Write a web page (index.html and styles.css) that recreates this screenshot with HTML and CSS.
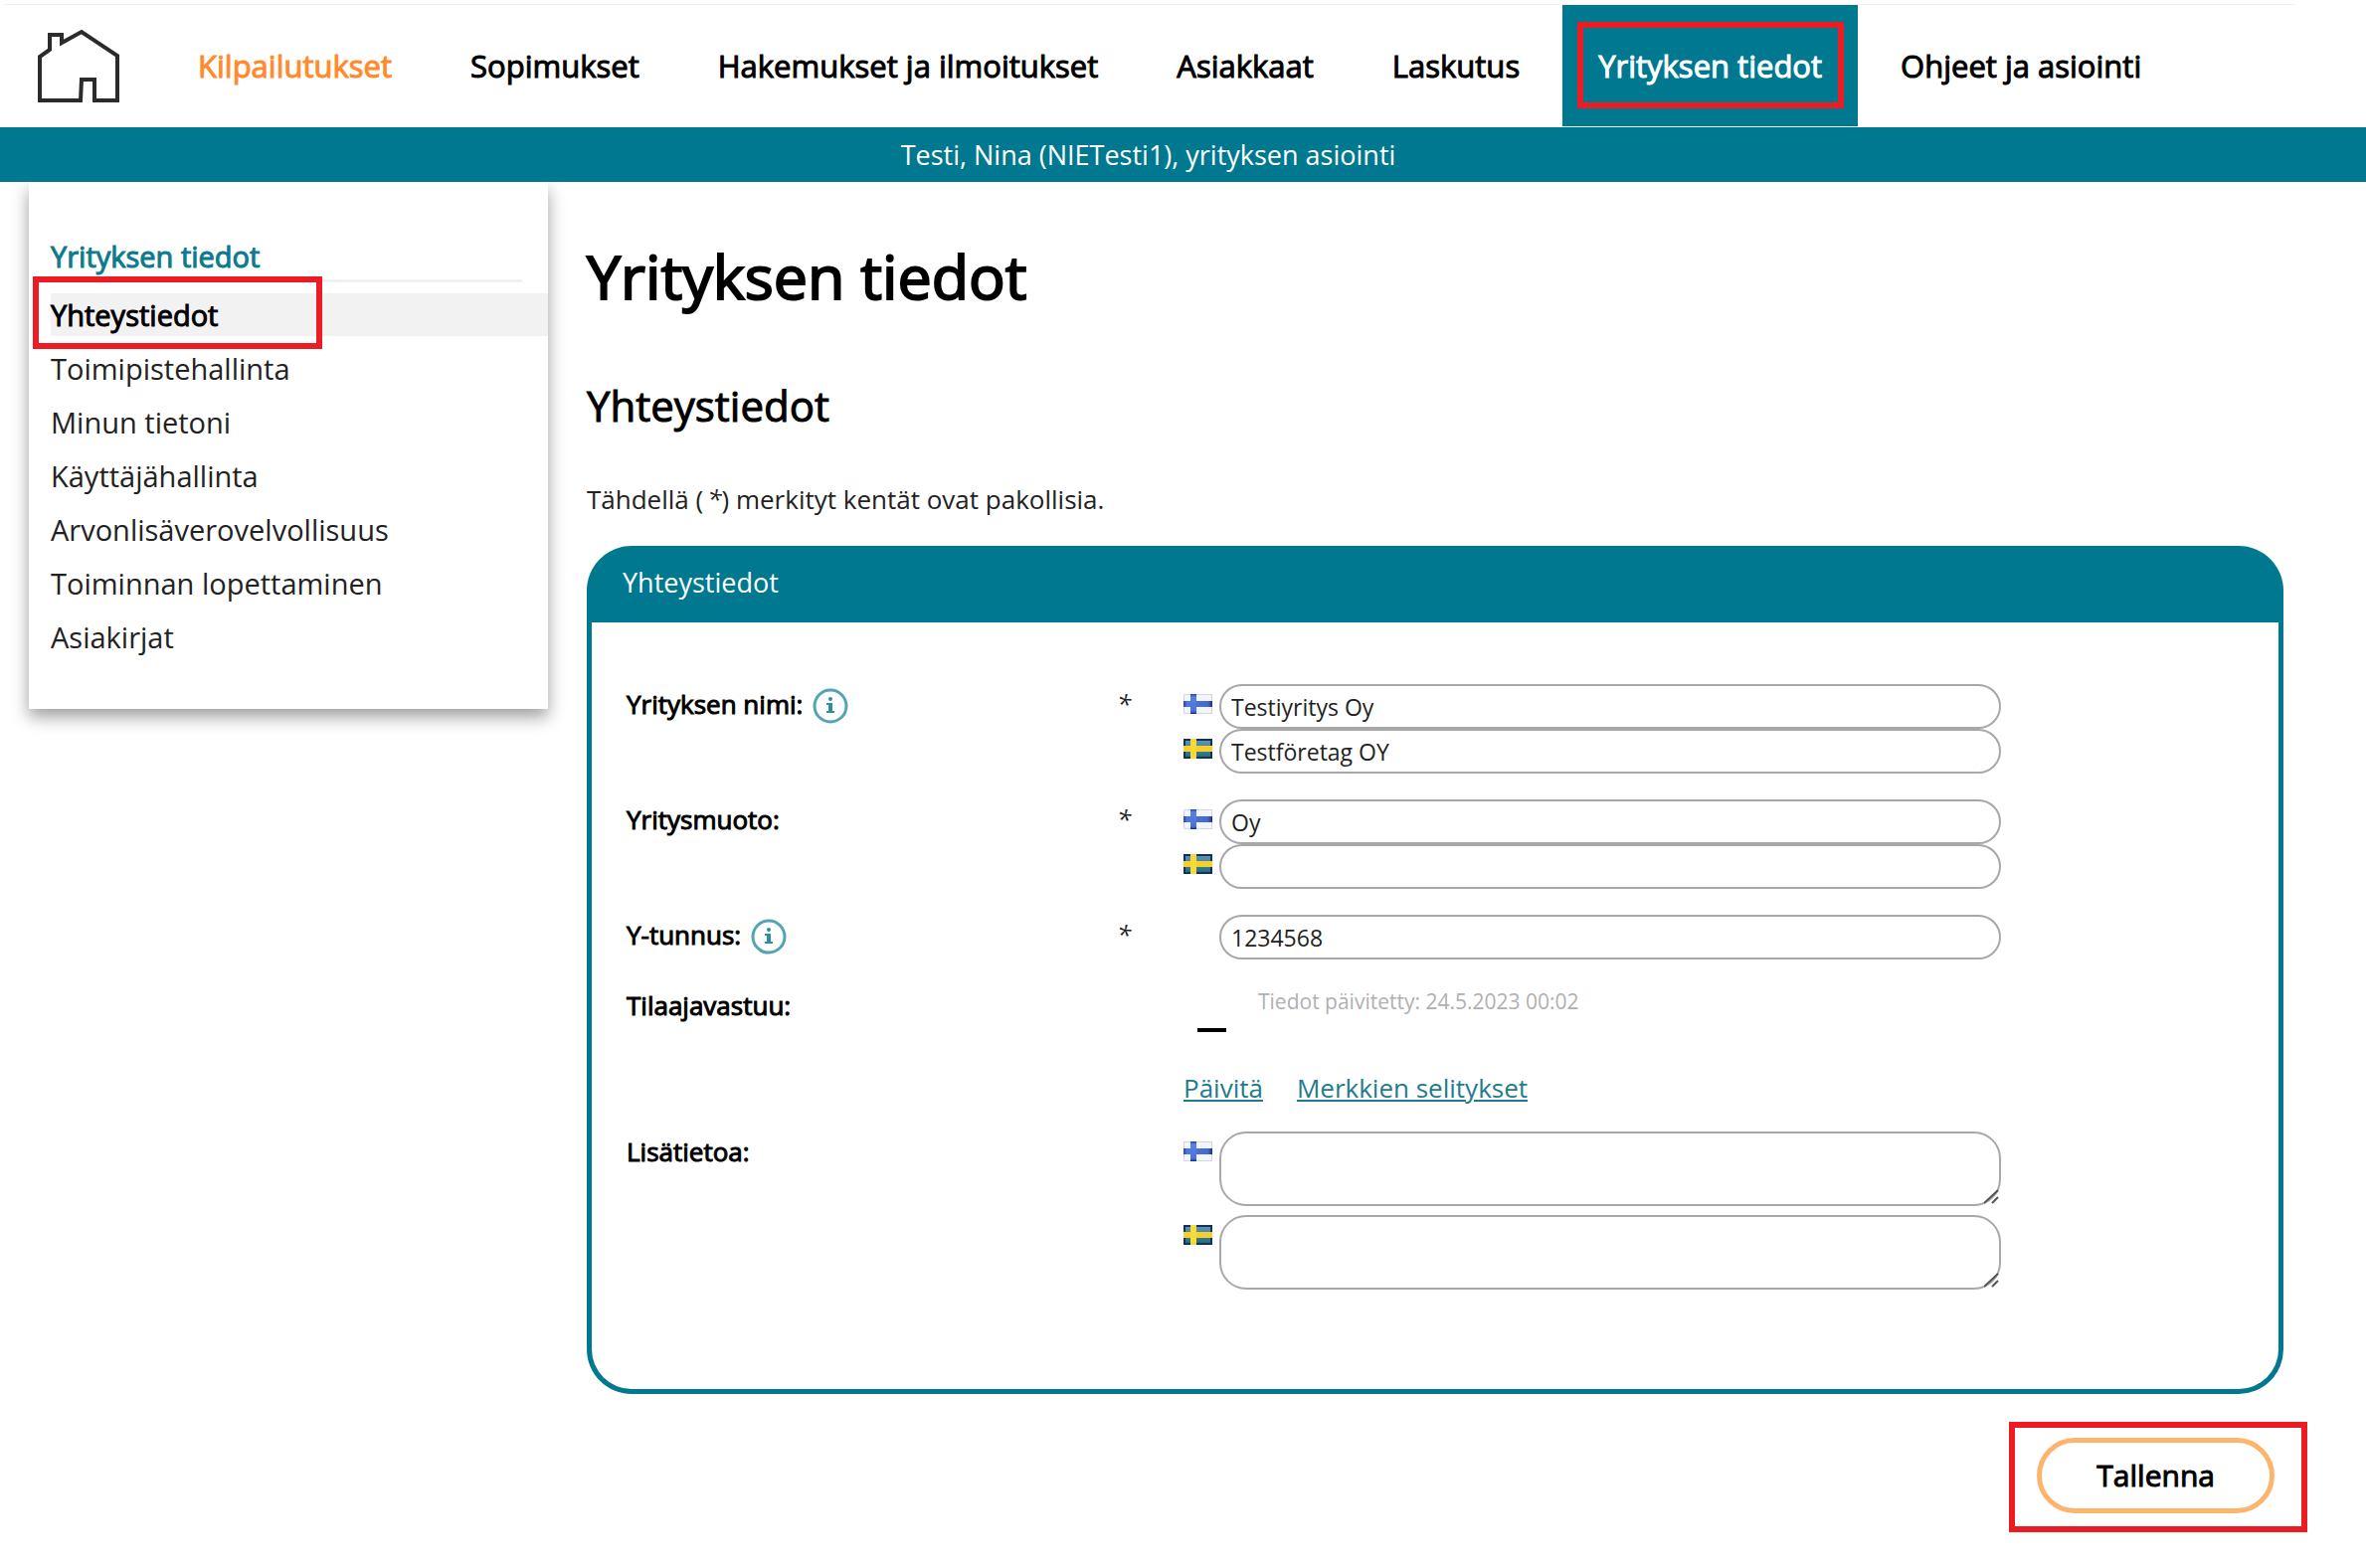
FILE: index.html
```html
<!DOCTYPE html>
<html lang="fi">
<head>
<meta charset="utf-8">
<title>Yrityksen tiedot</title>
<link rel="stylesheet" href="styles.css">
</head>
<body>
<svg class="sprite" aria-hidden="true">
  <defs>
    <linearGradient id="fi-h" x1="0" x2="1" y1="0" y2="0">
      <stop offset="0" stop-color="#2740a8"/><stop offset=".12" stop-color="#4f78dc"/>
      <stop offset=".85" stop-color="#4468cf"/><stop offset="1" stop-color="#1a2c8c"/>
    </linearGradient>
    <linearGradient id="fi-v" x1="0" x2="0" y1="0" y2="1">
      <stop offset="0" stop-color="#2740a8"/><stop offset=".15" stop-color="#5a82e2"/>
      <stop offset=".85" stop-color="#4a72da"/><stop offset="1" stop-color="#1a2490"/>
    </linearGradient>
    <linearGradient id="se-bg" x1="0" x2="0" y1="0" y2="1">
      <stop offset="0" stop-color="#5b94b4"/><stop offset="1" stop-color="#20707f"/>
    </linearGradient>
  </defs>
  <symbol id="flag-fi" viewBox="0 0 29 20">
    <rect width="29" height="20" fill="#d3d5e2"/>
    <rect x="1" y="1" width="27" height="18" fill="#f4f5fa"/>
    <rect y="7" width="29" height="6" fill="url(#fi-h)"/>
    <rect x="7" width="6" height="20" fill="url(#fi-v)"/>
  </symbol>
  <symbol id="flag-se" viewBox="0 0 29 20">
    <rect width="29" height="20" fill="#12305e"/>
    <rect x="2" y="2" width="25" height="16" fill="url(#se-bg)"/>
    <rect y="7" width="29" height="6" fill="#f5cf2e"/>
    <rect x="7" width="6" height="20" fill="#f9d936"/>
  </symbol>
  <symbol id="info" viewBox="0 0 36 36">
    <circle cx="18" cy="18" r="16" fill="#fff" stroke="#54a5b2" stroke-width="3"/>
    <circle cx="18" cy="11" r="2" fill="#2f8d9e"/>
    <path d="M14 15h6v8h2v2h-8v-2h2v-6h-2z" fill="#2f8d9e"/>
  </symbol>
</svg>

<header class="header">
  <a class="home" href="#" aria-label="Etusivu">
    <svg class="home-icon" viewBox="0 0 86 74" aria-hidden="true">
      <path d="M4 72V28L14 21V6H26V14L46 3L82 27V72H59V51H46L45 72Z" fill="none" stroke="#2b2b2b" stroke-width="4"/>
    </svg>
  </a>
  <nav class="nav" aria-label="Päävalikko">
    <a class="nav-link nav-link-accent" href="#">Kilpailutukset</a>
    <a class="nav-link" href="#">Sopimukset</a>
    <a class="nav-link" href="#">Hakemukset ja ilmoitukset</a>
    <a class="nav-link" href="#">Asiakkaat</a>
    <a class="nav-link" href="#">Laskutus</a>
    <a class="nav-link nav-link-active" href="#" aria-current="page">Yrityksen tiedot</a>
    <a class="nav-link" href="#">Ohjeet ja asiointi</a>
  </nav>
</header>
<div class="userbar">Testi, Nina (NIETesti1), yrityksen asiointi</div>

<div class="layout">
  <aside class="sidebar">
    <h2 class="side-title">Yrityksen tiedot</h2>
    <nav class="side-nav" aria-label="Yrityksen tiedot">
      <a class="side-link side-link-active" href="#" aria-current="page">Yhteystiedot</a>
      <a class="side-link" href="#">Toimipistehallinta</a>
      <a class="side-link" href="#">Minun tietoni</a>
      <a class="side-link" href="#">Käyttäjähallinta</a>
      <a class="side-link" href="#">Arvonlisäverovelvollisuus</a>
      <a class="side-link" href="#">Toiminnan lopettaminen</a>
      <a class="side-link" href="#">Asiakirjat</a>
    </nav>
  </aside>

  <main class="main">
    <h1 class="page-title">Yrityksen tiedot</h1>
    <h2 class="section-title">Yhteystiedot</h2>
    <p class="note">Tähdellä (<em class="note-star">*</em>) merkityt kentät ovat pakollisia.</p>

    <form class="form">
      <section class="panel">
        <h3 class="panel-title">Yhteystiedot</h3>
        <div class="panel-body">
          <div class="row">
            <div class="label"><label for="name-fi">Yrityksen nimi:</label> <svg class="info" role="img" aria-label="Ohje"><use href="#info"/></svg></div>
            <em class="star">*</em>
            <div class="fields">
              <div class="field"><svg class="flag" aria-hidden="true"><use href="#flag-fi"/></svg><input class="input" id="name-fi" type="text" value="Testiyritys Oy"></div>
              <div class="field"><svg class="flag" aria-hidden="true"><use href="#flag-se"/></svg><input class="input" type="text" value="Testföretag OY" aria-label="Yrityksen nimi ruotsiksi"></div>
            </div>
          </div>
          <div class="row">
            <div class="label"><label for="form-fi">Yritysmuoto:</label></div>
            <em class="star">*</em>
            <div class="fields">
              <div class="field"><svg class="flag" aria-hidden="true"><use href="#flag-fi"/></svg><input class="input" id="form-fi" type="text" value="Oy"></div>
              <div class="field"><svg class="flag" aria-hidden="true"><use href="#flag-se"/></svg><input class="input" type="text" aria-label="Yritysmuoto ruotsiksi"></div>
            </div>
          </div>
          <div class="row">
            <div class="label"><label for="business-id">Y-tunnus:</label> <svg class="info" role="img" aria-label="Ohje"><use href="#info"/></svg></div>
            <em class="star">*</em>
            <div class="fields">
              <div class="field"><span class="flag"></span><input class="input" id="business-id" type="text" value="1234568"></div>
            </div>
          </div>
          <div class="row">
            <div class="label">Tilaajavastuu:</div>
            <span></span>
            <div class="fields">
              <div class="status"><span class="dash"></span><span class="updated">Tiedot päivitetty: 24.5.2023 00:02</span></div>
              <div class="links"><a class="link" href="#">Päivitä</a><a class="link" href="#">Merkkien selitykset</a></div>
            </div>
          </div>
          <div class="row">
            <div class="label"><label for="info-fi">Lisätietoa:</label></div>
            <span></span>
            <div class="fields fields-spaced">
              <div class="field"><svg class="flag" aria-hidden="true"><use href="#flag-fi"/></svg><textarea class="input textarea" id="info-fi"></textarea></div>
              <div class="field"><svg class="flag" aria-hidden="true"><use href="#flag-se"/></svg><textarea class="input textarea" aria-label="Lisätietoa ruotsiksi"></textarea></div>
            </div>
          </div>
        </div>
      </section>
      <div class="actions">
        <div class="highlight"><button class="button" type="button">Tallenna</button></div>
      </div>
    </form>
  </main>
</div>
</body>
</html>
```
FILE: styles.css
```css
:root {
  --teal: #00788f;
  --red: #ec1c24;
}

*,
*::after {
  box-sizing: border-box;
}

body {
  margin: 0;
  background: #fff;
  color: #222;
  font-family: "Open Sans", "Noto Sans", sans-serif;
  font-size: 26px;
  line-height: 36px;
}

h1, h2, h3, p {
  margin: 0;
  font-weight: 400;
}

a {
  color: inherit;
  text-decoration: none;
}

.sprite {
  position: absolute;
  width: 0;
  height: 0;
}

/* Top navigation */
.header {
  display: flex;
  align-items: stretch;
  margin: 4px 72px 1px 3px;
  border-top: 1px solid #f1f1f1;
}

.home {
  display: flex;
  align-items: center;
  width: 160px;
  padding-left: 33px;
}

.home-icon {
  width: 86px;
  height: 74px;
}

.nav {
  display: flex;
  gap: 7px;
}

.nav-link {
  position: relative;
  padding: 40px 36px;
  color: #000;
  font-size: 31px;
  line-height: 42px;
  white-space: nowrap;
  -webkit-text-stroke: 1px;
}

.nav-link-accent {
  color: #ff8a2b;
}

.nav-link-active {
  background: var(--teal);
  color: #fff;
}

.nav-link-active::after {
  content: "";
  position: absolute;
  inset: 17px 14px 18px 15px;
  border: 6px solid var(--red);
}

.userbar {
  position: relative;
  z-index: 1;
  padding: 10px 70px 9px 0;
  background: var(--teal);
  color: #fff;
  font-size: 27px;
  text-align: center;
}

/* Page columns */
.layout {
  display: flex;
  align-items: flex-start;
}

.sidebar {
  flex: none;
  width: 522px;
  margin-left: 29px;
  padding: 54px 0 51px 22px;
  box-shadow: 0 8px 16px rgba(0, 0, 0, .38);
  font-size: 29px;
}

.side-title {
  margin: 0 26px 11px 0;
  padding-bottom: 2px;
  border-bottom: 3px solid #f1f1f1;
  color: #0b7a8c;
  font-size: 29px;
  line-height: 42px;
  -webkit-text-stroke: 1px;
}

.side-nav {
  display: flex;
  flex-direction: column;
  gap: 11px;
}

.side-link {
  position: relative;
  line-height: 43px;
}

.side-link-active {
  background: #f2f2f2;
  color: #000;
  -webkit-text-stroke: 1px;
}

.side-link-active::after {
  content: "";
  position: absolute;
  inset: -17px auto -13px -18px;
  width: 291px;
  border: 6px solid var(--red);
}

.main {
  flex: 1;
  min-width: 0;
  padding: 55px 59px 34px 39px;
}

.page-title {
  color: #000;
  font-size: 61px;
  line-height: 80px;
  -webkit-text-stroke: 2px;
}

.section-title {
  margin-top: 62px;
  color: #000;
  font-size: 42px;
  line-height: 56px;
  -webkit-text-stroke: 1px;
}

.note {
  margin-top: 48px;
}

.note-star {
  padding-left: 4px;
}

/* Form panel */
.panel {
  margin: 29px 24px 0 0;
  padding: 5px;
  border-radius: 45px;
  background: var(--teal);
}

.panel-title {
  padding: 14px 31px 22px;
  color: #fff;
  font-size: 27px;
  line-height: 36px;
}

.panel-body {
  display: flex;
  flex-direction: column;
  gap: 26px;
  padding: 62px 35px 100px;
  border-radius: 0 0 40px 40px;
  background: #fff;
}

.row {
  display: grid;
  grid-template-columns: 493fr 67fr 822fr 244fr;
}

.label {
  display: flex;
  align-items: flex-start;
  gap: 10px;
  color: #000;
  line-height: 40px;
  -webkit-text-stroke: 1px;
}

.info {
  width: 36px;
  height: 36px;
  margin-top: 4px;
  -webkit-text-stroke: 0;
}

.star {
  line-height: 40px;
}

.fields {
  display: flex;
  flex-direction: column;
}

.fields-spaced {
  gap: 9px;
}

.field {
  display: flex;
  gap: 7px;
}

.flag {
  flex: none;
  width: 29px;
  height: 20px;
  margin-top: 10px;
}

.input {
  flex: 1;
  min-width: 0;
  height: 45px;
  margin: 0;
  padding: 0 10px;
  border: 2px solid #a8a8a8;
  border-radius: 23px;
  background: #fff;
  color: #222;
  font: inherit;
  font-size: 23px;
}

.textarea {
  height: 75px;
  border-radius: 27px;
}

.textarea::-webkit-resizer {
  background: url("data:image/svg+xml,%3Csvg xmlns='http://www.w3.org/2000/svg' viewBox='0 0 15 15'%3E%3Cpath d='M0 14L14 1M8 14L14 8' stroke='%23555' stroke-width='2' fill='none'/%3E%3C/svg%3E") no-repeat;
}

.status {
  display: flex;
  gap: 32px;
  height: 85px;
  padding-left: 14px;
}

.dash {
  width: 29px;
  height: 4px;
  margin-top: 43px;
  background: #000;
}

.updated {
  color: #b0b0b0;
  font-size: 21px;
  line-height: 32px;
}

.links {
  display: flex;
  gap: 34px;
}

.link {
  color: #1d7c8d;
  text-decoration: underline;
}

.actions {
  display: flex;
  justify-content: flex-end;
  margin-top: 28px;
}

.highlight {
  padding: 10px 27px 13px 22px;
  border: 6px solid var(--red);
}

.button {
  padding: 12px 55px;
  border: 5px solid #fdb56d;
  border-radius: 38px;
  background: #fff;
  color: #000;
  font: inherit;
  font-size: 30px;
  line-height: 42px;
  -webkit-text-stroke: 1px;
}
```
